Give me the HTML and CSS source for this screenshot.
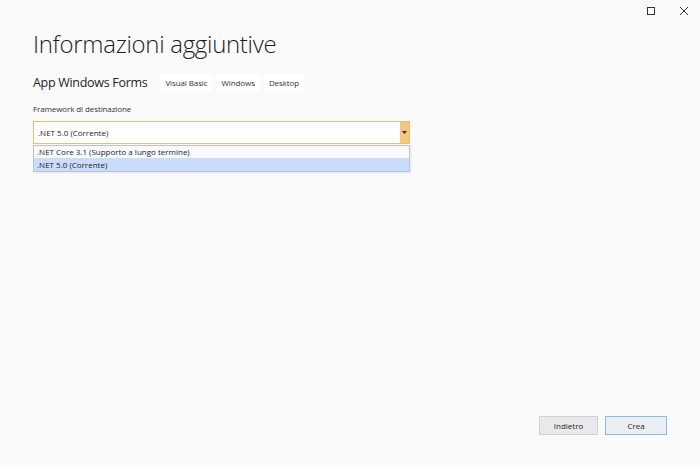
FILE: index.html
```html
<!DOCTYPE html>
<html lang="it">
<head>
<meta charset="utf-8">
<title>Informazioni aggiuntive</title>
<link rel="stylesheet" href="styles.css">
</head>
<body>
<div class="window">
  <div class="titlebar">
    <span class="ctl max"><svg width="10" height="10" viewBox="0 0 10 10"><rect x="1.5" y="1.5" width="7" height="7" fill="none" stroke="#333" stroke-width="1"/></svg></span>
    <span class="ctl close"><svg width="10" height="10" viewBox="0 0 10 10"><path d="M1 1L9 9M9 1L1 9" stroke="#333" stroke-width="1" fill="none"/></svg></span>
  </div>
  <div class="content">
    <h1 class="title">Informazioni aggiuntive</h1>
    <div class="project">
      <span class="pname">App Windows Forms</span>
      <span class="tag">Visual Basic</span>
      <span class="tag">Windows</span>
      <span class="tag">Desktop</span>
    </div>
    <div class="label">Framework di destinazione</div>
    <div class="combo">
      <div class="combo-box">
        <span class="combo-text">.NET 5.0 (Corrente)</span>
        <span class="combo-btn"><svg width="5" height="3" viewBox="0 0 5 3"><path d="M0 0H5L2.5 3Z" fill="#333"/></svg></span>
      </div>
      <div class="combo-list">
        <div class="item">.NET Core 3.1 (Supporto a lungo termine)</div>
        <div class="item sel">.NET 5.0 (Corrente)</div>
      </div>
    </div>
  </div>
  <div class="footer">
    <button class="btn">Indietro</button>
    <button class="btn primary">Crea</button>
  </div>
</div>
</body>
</html>
```
FILE: styles.css
```css
html, body {
  margin: 0;
  padding: 0;
  background: #fafafa;
}
body {
  font-family: "Open Sans", "Noto Sans", "Liberation Sans", sans-serif;
  color: #1e1e1e;
  width: 700px;
  height: 465px;
  overflow: hidden;
}
.window {
  width: 700px;
  height: 465px;
  display: flex;
  flex-direction: column;
}
.titlebar {
  height: 22px;
  display: flex;
  justify-content: flex-end;
  align-items: center;
  padding-right: 11px;
  gap: 23px;
}
.ctl {
  display: flex;
  width: 10px;
  height: 10px;
}
.content {
  flex: 1;
  padding: 8px 0 0 33px;
}
.title {
  margin: 0;
  font-weight: 300;
  font-size: 24px;
  line-height: 28px;
  letter-spacing: -0.3px;
  color: #1e1e1e;
}
.project {
  display: flex;
  align-items: center;
  margin-top: 15px;
  height: 18px;
}
.pname {
  font-size: 12.5px;
  letter-spacing: -0.3px;
  margin-right: 13px;
}
.tag {
  background: #ffffff;
  font-size: 8px;
  letter-spacing: -0.1px;
  padding: 0 5px;
  height: 17px;
  line-height: 17px;
  margin-right: 4px;
  color: #333;
}
.label {
  margin-top: 12px;
  font-size: 8px;
  letter-spacing: -0.1px;
  color: #333;
  line-height: 12px;
}
.combo {
  margin-top: 6px;
  width: 377px;
}
.combo-box {
  height: 23px;
  border: 1px solid #e5c365;
  background: #fff;
  display: flex;
  align-items: stretch;
  box-sizing: border-box;
}
.combo-text {
  flex: 1;
  font-size: 8px;
  line-height: 21px;
  padding-left: 4px;
  color: #1e1e1e;
}
.combo-btn {
  width: 9px;
  background: #f5c77e;
  display: flex;
  align-items: center;
  justify-content: center;
}
.combo-list {
  margin-top: 1px;
  border: 1px solid #bcc3d0;
  background: #f8fafd;
  box-shadow: 1px 1px 2px rgba(0,0,0,0.08);
  padding: 0;
}
.item {
  font-size: 8px;
  height: 12px;
  line-height: 12px;
  padding-left: 3px;
  color: #1e1e1e;
}
.item.sel {
  background: #c9dcfb;
  height: 13px;
  line-height: 13px;
}
.footer {
  display: flex;
  justify-content: flex-end;
  gap: 7px;
  padding: 0 33px 30px 0;
}
.btn {
  width: 59px;
  height: 19px;
  border: 1px solid #d0d0d0;
  background: #e9e9eb;
  font-family: inherit;
  font-size: 8px;
  color: #1e1e1e;
  padding: 0;
  margin: 0;
}
.btn.primary {
  width: 62px;
  border-color: #8ab6e8;
  background: #eaedf2;
}
```
